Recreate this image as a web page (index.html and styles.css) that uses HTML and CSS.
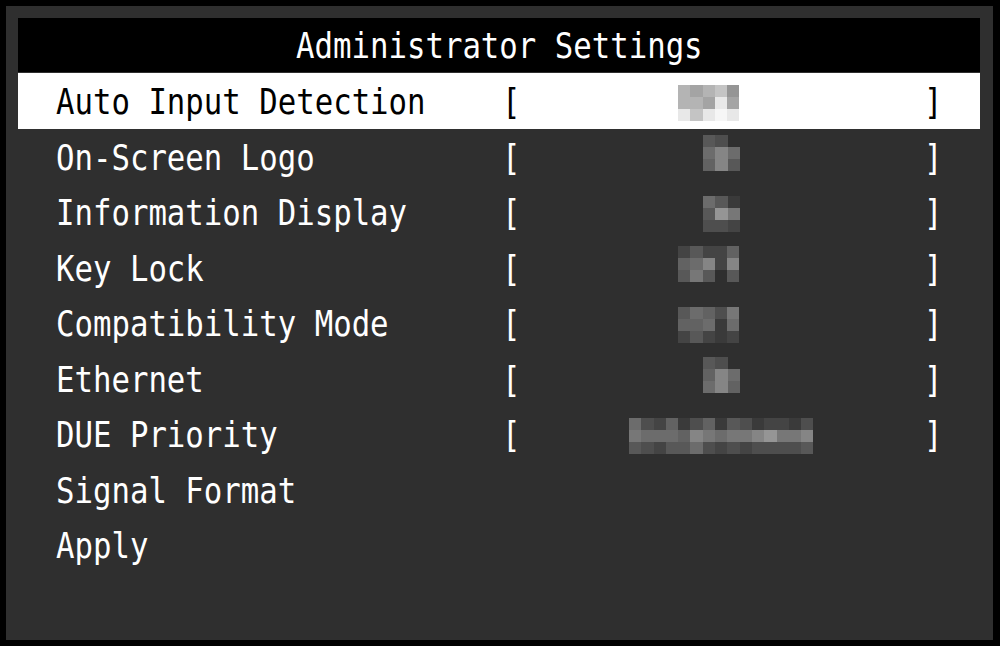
FILE: index.html
```html
<!DOCTYPE html>
<html lang="en">
<head>
<meta charset="utf-8">
<title>Administrator Settings</title>
<link rel="stylesheet" href="styles.css">
</head>
<body>
<div class="osd">
  <div class="title"><span class="t tc">Administrator Settings</span></div>
  <div class="list">
    <div class="row sel">
      <span class="label"><span class="t">Auto Input Detection</span></span>
      <span class="br"><span class="t">[</span></span>
      <div class="val"><div class="mos w5 o4 lo">
        <i class="pb"></i><i class="pa"></i><i class="pb"></i><i class="pc"></i><i class="p9"></i>
        <i class="pb"></i><i class="pb"></i><i class="pa"></i><i class="pe"></i><i class="pa"></i>
        <i class="pe"></i><i class="pc"></i><i class="pe"></i><i class="pf"></i><i class="pe"></i>
      </div></div>
      <span class="br"><span class="t">]</span></span>
    </div>
    <div class="row">
      <span class="label"><span class="t">On-Screen Logo</span></span>
      <span class="br"><span class="t">[</span></span>
      <div class="val"><div class="mos w3 o6 hi">
        <i class="p4"></i><i class="p3"></i><i class="p0"></i>
        <i class="p6"></i><i class="p8"></i><i class="p6"></i>
        <i class="p5"></i><i class="p8"></i><i class="p4"></i>
      </div></div>
      <span class="br"><span class="t">]</span></span>
    </div>
    <div class="row">
      <span class="label"><span class="t">Information Display</span></span>
      <span class="br"><span class="t">[</span></span>
      <div class="val"><div class="mos w3 o6 lo">
        <i class="p6"></i><i class="p4"></i><i class="p1"></i>
        <i class="p4"></i><i class="p9"></i><i class="p7"></i>
        <i class="p3"></i><i class="p3"></i><i class="p2"></i>
      </div></div>
      <span class="br"><span class="t">]</span></span>
    </div>
    <div class="row">
      <span class="label"><span class="t">Key Lock</span></span>
      <span class="br"><span class="t">[</span></span>
      <div class="val"><div class="mos w5 o4 hi">
        <i class="p2"></i><i class="p4"></i><i class="p2"></i><i class="p2"></i><i class="p5"></i>
        <i class="p5"></i><i class="p6"></i><i class="p8"></i><i class="p2"></i><i class="p8"></i>
        <i class="p4"></i><i class="p7"></i><i class="p4"></i><i class="p0"></i><i class="p4"></i>
      </div></div>
      <span class="br"><span class="t">]</span></span>
    </div>
    <div class="row">
      <span class="label"><span class="t">Compatibility Mode</span></span>
      <span class="br"><span class="t">[</span></span>
      <div class="val"><div class="mos w5 o4 lo">
        <i class="p4"></i><i class="p6"></i><i class="p5"></i><i class="p3"></i><i class="p7"></i>
        <i class="p5"></i><i class="p5"></i><i class="p6"></i><i class="p1"></i><i class="p6"></i>
        <i class="p2"></i><i class="p4"></i><i class="p2"></i><i class="p1"></i><i class="p2"></i>
      </div></div>
      <span class="br"><span class="t">]</span></span>
    </div>
    <div class="row">
      <span class="label"><span class="t">Ethernet</span></span>
      <span class="br"><span class="t">[</span></span>
      <div class="val"><div class="mos w3 o6 hi">
        <i class="p4"></i><i class="p3"></i><i class="p0"></i>
        <i class="p5"></i><i class="p8"></i><i class="p6"></i>
        <i class="p6"></i><i class="p8"></i><i class="p5"></i>
      </div></div>
      <span class="br"><span class="t">]</span></span>
    </div>
    <div class="row">
      <span class="label"><span class="t">DUE Priority</span></span>
      <span class="br"><span class="t">[</span></span>
      <div class="val"><div class="mos w15 lo">
        <i class="p6"></i><i class="p3"></i><i class="p2"></i><i class="p5"></i><i class="p1"></i><i class="p3"></i><i class="p5"></i><i class="p1"></i><i class="p4"></i><i class="p3"></i><i class="p1"></i><i class="p2"></i><i class="p2"></i><i class="p1"></i><i class="p3"></i>
        <i class="p7"></i><i class="p6"></i><i class="p6"></i><i class="p6"></i><i class="p5"></i><i class="p8"></i><i class="p7"></i><i class="p6"></i><i class="p7"></i><i class="p7"></i><i class="p8"></i><i class="p9"></i><i class="p7"></i><i class="p7"></i><i class="p8"></i>
        <i class="p4"></i><i class="p3"></i><i class="p2"></i><i class="p4"></i><i class="p4"></i><i class="p6"></i><i class="p3"></i><i class="p2"></i><i class="p3"></i><i class="p2"></i><i class="p3"></i><i class="p3"></i><i class="p3"></i><i class="p3"></i><i class="p4"></i>
      </div></div>
      <span class="br"><span class="t">]</span></span>
    </div>
    <div class="row">
      <span class="label"><span class="t">Signal Format</span></span>
    </div>
    <div class="row">
      <span class="label"><span class="t">Apply</span></span>
    </div>
  </div>
</div>
</body>
</html>
```

FILE: styles.css
```css
* { box-sizing: border-box; }

html, body {
  margin: 0;
  padding: 0;
  background: #000;
}

body {
  width: 1000px;
  height: 646px;
  overflow: hidden;
  padding: 6px 7px 6px 6px;
  font-family: "DejaVu Sans Mono", "Liberation Mono", monospace;
  font-size: 35.7px;
  color: #fff;
}

.osd {
  width: 987px;
  height: 634px;
  background: #2f2f2f;
  padding: 12px 13px 12px 12px;
}

.t {
  display: inline-block;
  transform: scaleX(0.86);
  transform-origin: 0 50%;
  white-space: pre;
}

.tc { transform-origin: 50% 50%; }

.title {
  height: 54px;
  line-height: 56px;
  background: #000;
  text-align: center;
  margin-bottom: 1px;
  overflow: hidden;
}

.list {
  display: flex;
  flex-direction: column;
}

.row {
  height: 55.5px;
  line-height: 57px;
  display: grid;
  grid-template-columns: 446px 18px 404px 18px;
  align-items: start;
  padding-left: 38px;
  overflow: hidden;
}

.row.sel {
  background: #fff;
  color: #000;
}

.label, .br {
  white-space: nowrap;
  height: 55px;
}

.val {
  display: flex;
  padding-left: 109px;
}

.mos {
  display: grid;
  grid-auto-rows: 12px;
}

.mos i {
  display: block;
}

.w3 { grid-template-columns: repeat(3, 12.3px); }
.w5 { grid-template-columns: repeat(5, 12.3px); }
.w15 { grid-template-columns: repeat(15, 12.3px); }

.o4 { margin-left: 49px; }
.o6 { margin-left: 74px; }

.hi { margin-top: 6px; }
.lo { margin-top: 12px; }

.p0 { background: transparent; }
.p1 { background: #3a3a3a; }
.p2 { background: #444444; }
.p3 { background: #4e4e4e; }
.p4 { background: #585858; }
.p5 { background: #626262; }
.p6 { background: #6c6c6c; }
.p7 { background: #777777; }
.p8 { background: #858585; }
.p9 { background: #959595; }
.pa { background: #a4a4a4; }
.pb { background: #b4b4b4; }
.pc { background: #c4c4c4; }
.pd { background: #d6d6d6; }
.pe { background: #e8e8e8; }
.pf { background: #f6f6f6; }
```
